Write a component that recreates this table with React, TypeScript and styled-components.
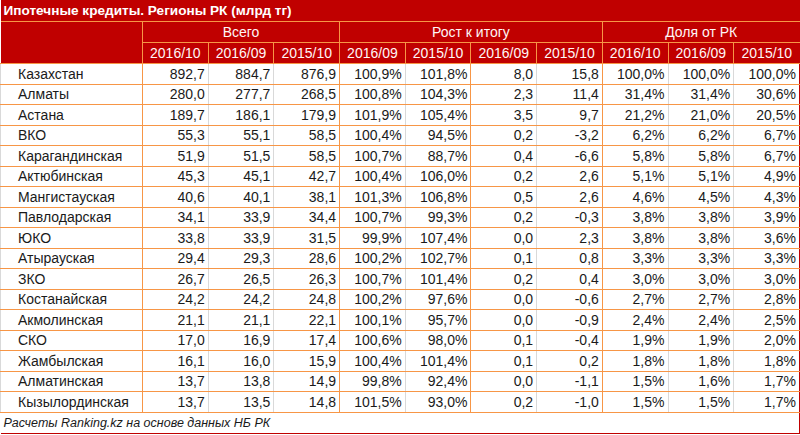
import React from "react";
import styled, { createGlobalStyle } from "styled-components";

const RED = "#c00000";
const ORANGE = "#f79646";
const GRAY = "#d9d9d9";

const Global = createGlobalStyle`
  html, body {
    margin: 0;
    padding: 0;
    background: #ffffff;
  }
  body {
    font-family: "Liberation Sans", Arial, sans-serif;
  }
`;

const Sheet = styled.table`
  width: 800px;
  border-collapse: collapse;
  table-layout: fixed;
  font-family: "Liberation Sans", Arial, sans-serif;
  font-size: 14px;
  color: #1a1a1a;
`;

const TitleCell = styled.th`
  height: 21px;
  padding: 0 3px;
  background: ${RED};
  color: #ffffff;
  font-weight: 700;
  font-size: 13.6px;
  text-align: left;
  border-bottom: 1px solid ${ORANGE};
  white-space: nowrap;
`;

const HeadCell = styled.th`
  height: 20px;
  padding: 0;
  background: ${RED};
  color: #fff6f6;
  font-weight: 400;
  text-align: center;
  border-bottom: 1px solid ${ORANGE};
  border-left: 1px solid ${ORANGE};
`;

const CornerCell = styled.th`
  background: ${RED};
  border-bottom: 1px solid ${ORANGE};
`;

const Row = styled.tr`
  height: 20.5px;
`;

const NameCell = styled.td`
  padding: 0 0 0 17px;
  border-bottom: 1px solid ${ORANGE};
  border-left: 1px solid ${GRAY};
  white-space: nowrap;
`;

const NumCell = styled.td<{ $major?: boolean; $last?: boolean }>`
  padding: 0 3px 0 0;
  text-align: right;
  border-bottom: 1px solid ${ORANGE};
  border-left: 1px solid ${(p) => (p.$major ? ORANGE : GRAY)};
  border-right: ${(p) => (p.$last ? `1px solid ${RED}` : "none")};
  white-space: nowrap;
`;

const FootCell = styled.td`
  height: 20px;
  padding: 0 3px;
  font-style: italic;
  font-size: 12.5px;
  border-top: 1px solid ${RED};
  border-bottom: 1px solid ${RED};
  border-right: 1px solid ${RED};
  white-space: nowrap;
`;

type Region = [string, string[]];

const rows: Region[] = [
  ["Казахстан", ["892,7", "884,7", "876,9", "100,9%", "101,8%", "8,0", "15,8", "100,0%", "100,0%", "100,0%"]],
  ["Алматы", ["280,0", "277,7", "268,5", "100,8%", "104,3%", "2,3", "11,4", "31,4%", "31,4%", "30,6%"]],
  ["Астана", ["189,7", "186,1", "179,9", "101,9%", "105,4%", "3,5", "9,7", "21,2%", "21,0%", "20,5%"]],
  ["ВКО", ["55,3", "55,1", "58,5", "100,4%", "94,5%", "0,2", "-3,2", "6,2%", "6,2%", "6,7%"]],
  ["Карагандинская", ["51,9", "51,5", "58,5", "100,7%", "88,7%", "0,4", "-6,6", "5,8%", "5,8%", "6,7%"]],
  ["Актюбинская", ["45,3", "45,1", "42,7", "100,4%", "106,0%", "0,2", "2,6", "5,1%", "5,1%", "4,9%"]],
  ["Мангистауская", ["40,6", "40,1", "38,1", "101,3%", "106,8%", "0,5", "2,6", "4,6%", "4,5%", "4,3%"]],
  ["Павлодарская", ["34,1", "33,9", "34,4", "100,7%", "99,3%", "0,2", "-0,3", "3,8%", "3,8%", "3,9%"]],
  ["ЮКО", ["33,8", "33,9", "31,5", "99,9%", "107,4%", "0,0", "2,3", "3,8%", "3,8%", "3,6%"]],
  ["Атырауская", ["29,4", "29,3", "28,6", "100,2%", "102,7%", "0,1", "0,8", "3,3%", "3,3%", "3,3%"]],
  ["ЗКО", ["26,7", "26,5", "26,3", "100,7%", "101,4%", "0,2", "0,4", "3,0%", "3,0%", "3,0%"]],
  ["Костанайская", ["24,2", "24,2", "24,8", "100,2%", "97,6%", "0,0", "-0,6", "2,7%", "2,7%", "2,8%"]],
  ["Акмолинская", ["21,1", "21,1", "22,1", "100,1%", "95,7%", "0,0", "-0,9", "2,4%", "2,4%", "2,5%"]],
  ["СКО", ["17,0", "16,9", "17,4", "100,6%", "98,0%", "0,1", "-0,4", "1,9%", "1,9%", "2,0%"]],
  ["Жамбылская", ["16,1", "16,0", "15,9", "100,4%", "101,4%", "0,1", "0,2", "1,8%", "1,8%", "1,8%"]],
  ["Алматинская", ["13,7", "13,8", "14,9", "99,8%", "92,4%", "0,0", "-1,1", "1,5%", "1,6%", "1,7%"]],
  ["Кызылординская", ["13,7", "13,5", "14,8", "101,5%", "93,0%", "0,2", "-1,0", "1,5%", "1,5%", "1,7%"]],
];

const periods = ["2016/10", "2016/09", "2015/10", "2016/09", "2015/10", "2016/09", "2015/10", "2016/10", "2016/09", "2015/10"];
// columns that start with an orange line
const majorCols = [0, 3, 5, 7];

export default function App() {
  return (
    <>
      <Global />
      <Sheet>
        <colgroup>
          <col style={{ width: 142 }} />
          {periods.map((_, i) => (
            <col key={i} />
          ))}
        </colgroup>
        <thead>
          <tr>
            <TitleCell colSpan={11}>Ипотечные кредиты. Регионы РК (млрд тг)</TitleCell>
          </tr>
          <tr>
            <CornerCell rowSpan={2} />
            <HeadCell colSpan={3}>Всего</HeadCell>
            <HeadCell colSpan={4}>Рост к итогу</HeadCell>
            <HeadCell colSpan={3}>Доля от РК</HeadCell>
          </tr>
          <tr>
            {periods.map((p, i) => (
              <HeadCell key={i}>{p}</HeadCell>
            ))}
          </tr>
        </thead>
        <tbody>
          {rows.map(([name, vals]) => (
            <Row key={name}>
              <NameCell>{name}</NameCell>
              {vals.map((v, i) => (
                <NumCell key={i} $major={majorCols.includes(i)} $last={i === vals.length - 1}>
                  {v}
                </NumCell>
              ))}
            </Row>
          ))}
        </tbody>
        <tfoot>
          <tr>
            <FootCell colSpan={11}>Расчеты Ranking.kz на основе данных НБ РК</FootCell>
          </tr>
        </tfoot>
      </Sheet>
    </>
  );
}
